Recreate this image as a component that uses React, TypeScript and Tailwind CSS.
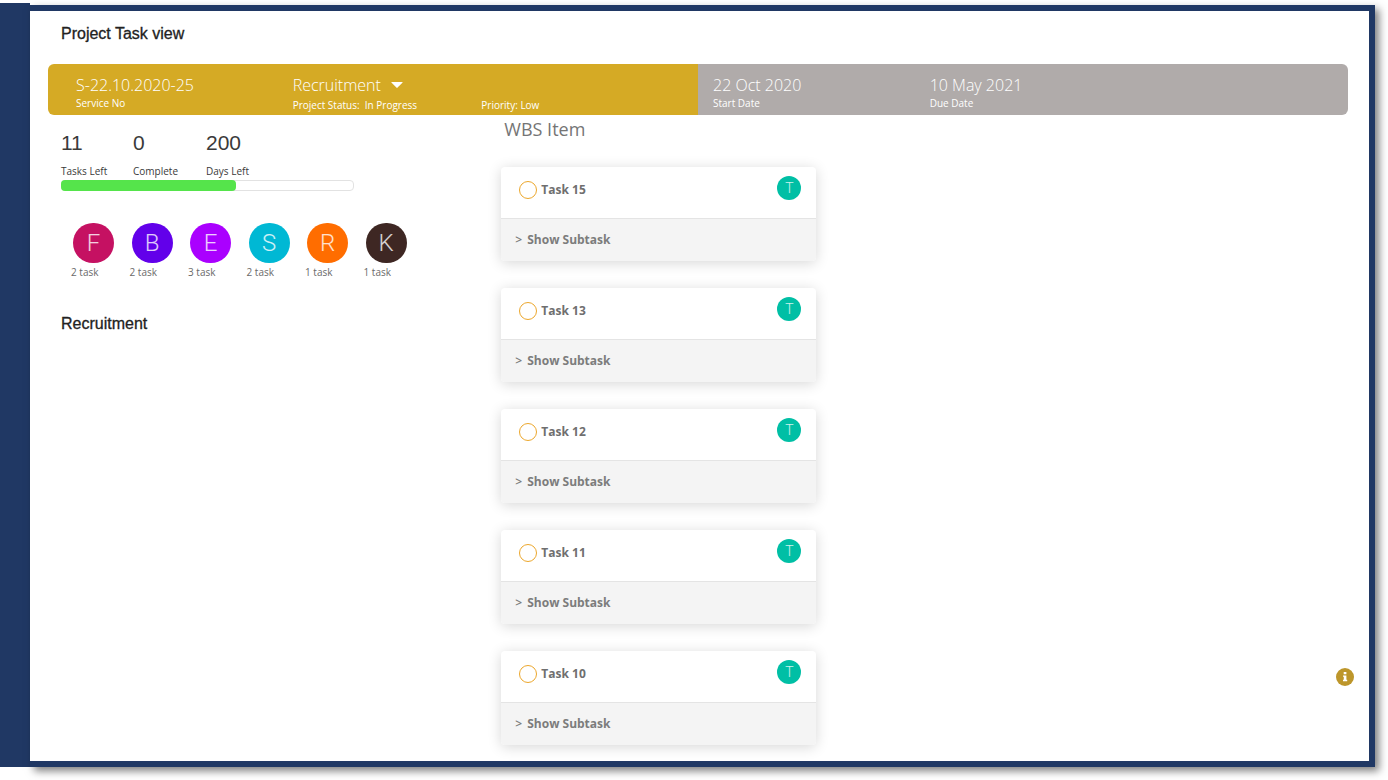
import { useState } from "react";

const stats = [
  { value: "11", label: "Tasks Left" },
  { value: "0", label: "Complete" },
  { value: "200", label: "Days Left" },
];

const members = [
  { initial: "F", count: 2, color: "bg-[#c51162]" },
  { initial: "B", count: 2, color: "bg-[#6200ea]" },
  { initial: "E", count: 3, color: "bg-[#aa00ff]" },
  { initial: "S", count: 2, color: "bg-[#00b8d4]" },
  { initial: "R", count: 1, color: "bg-[#ff6d00]" },
  { initial: "K", count: 1, color: "bg-[#3e2723]" },
];

const tasks = ["Task 15", "Task 13", "Task 12", "Task 11", "Task 10"];

function Field({ value, label }: { value: string; label: string }) {
  return (
    <div>
      <div className="text-base leading-5 font-light">{value}</div>
      <div className="text-[10px] leading-4">{label}</div>
    </div>
  );
}

function SummaryBar() {
  return (
    <section className="mt-[19px] mr-[21px] ml-[18px] grid h-[51px] grid-cols-2 overflow-hidden rounded-md text-white">
      <div className="grid grid-cols-3 bg-[#d5aa25] pt-[11px]">
        <div className="pl-7">
          <Field value="S-22.10.2020-25" label="Service No" />
        </div>
        <div className="pl-7">
          <button type="button" className="flex items-center gap-[10px] text-base leading-5 font-light">
            Recruitment
            <svg className="h-[6px] w-3" viewBox="0 0 12 6" fill="currentColor" aria-hidden="true">
              <path d="M0.8 0H11.2Q12 0 11.4 0.7L6.6 5.6Q6 6.2 5.4 5.6L0.6 0.7Q0 0 0.8 0Z" />
            </svg>
          </button>
          <div className="text-[10px] leading-5 whitespace-pre">Project Status:  In Progress</div>
        </div>
        <div className="pt-5 text-[10px] leading-5">Priority: Low</div>
      </div>
      <div className="grid grid-cols-3 bg-[#b0abaa] pt-[11px]">
        <div className="pl-[15px]">
          <Field value="22 Oct 2020" label="Start Date" />
        </div>
        <div className="pl-[15px]">
          <Field value="10 May 2021" label="Due Date" />
        </div>
      </div>
    </section>
  );
}

function TaskCard({ name }: { name: string }) {
  const [done, setDone] = useState(false);
  return (
    <li className="overflow-hidden rounded-sm bg-white shadow-[0_2px_14px_rgba(0,0,0,0.16)]">
      <div className="flex h-[51px] items-start justify-between pt-[9px] pr-[15px] pl-[18px]">
        <label className="flex items-center gap-1 pt-1 text-xs leading-5 font-bold text-[#6f6f6f]">
          <input
            type="checkbox"
            checked={done}
            onChange={() => setDone(!done)}
            className="size-[18px] appearance-none rounded-full border border-[#eca72c] checked:bg-[#eca72c]"
          />
          {name}
        </label>
        <span className="flex size-6 items-center justify-center rounded-full bg-[#00bfa5] font-[Roboto,sans-serif] text-sm font-light text-white/80">
          T
        </span>
      </div>
      <div className="flex h-[43px] items-center border-t border-[#e4e4e4] bg-[#f4f4f4] pl-[14px]">
        <button type="button" className="flex items-center gap-[5px] text-xs font-bold text-[#7c7c7c]">
          <span className="font-semibold">&gt;</span>
          Show Subtask
        </button>
      </div>
    </li>
  );
}

export default function App() {
  return (
    <div className="flex min-h-screen bg-white pb-[13px] font-['Open_Sans',sans-serif] text-[#3a3a3a]">
      <aside className="mt-[3px] w-[30px] shrink-0 bg-[#203864]" />
      <main className="relative mt-[5px] mr-[13px] min-w-0 flex-1 border-y-[6px] border-r-[6px] border-[#203864] bg-white pb-4 shadow-[4px_4px_8px_rgba(0,0,0,0.5)]">
        <h1 className="pt-3 pl-[31px] font-['Liberation_Sans',sans-serif] text-base leading-[22px] text-[#222222] [-webkit-text-stroke:0.3px_#222222]">
          Project Task view
        </h1>
        <SummaryBar />
        <div className="mr-[21px] ml-[18px] grid grid-cols-3">
          <section className="pl-[13px]">
            <dl className="grid grid-cols-[72px_73px_auto] pt-4">
              {stats.map((s) => (
                <div key={s.label} className="flex flex-col-reverse">
                  <dt className="mt-2 text-[10px] leading-4">{s.label}</dt>
                  <dd className="font-['Liberation_Sans',sans-serif] text-[21px] leading-6">{s.value}</dd>
                </div>
              ))}
            </dl>
            <div className="mt-px h-[11px] w-[293px] rounded-sm border border-[#e2e2e2]">
              <div className="-m-px h-[11px] w-3/5 rounded-sm bg-[#55e44b]" />
            </div>
            <ul className="mt-8 ml-[10px] grid w-[351px] grid-cols-6">
              {members.map((m) => (
                <li key={m.initial}>
                  <span
                    className={`ml-[2px] flex h-10 w-[41px] items-center justify-center rounded-full font-[Roboto,sans-serif] text-2xl font-light text-white/80 ${m.color}`}
                  >
                    {m.initial}
                  </span>
                  <span className="block text-[10px] leading-[18px] text-[#6a6a6a]">{m.count} task</span>
                </li>
              ))}
            </ul>
            <h2 className="mt-8 font-['Liberation_Sans',sans-serif] text-base leading-[22px] text-[#222222] [-webkit-text-stroke:0.3px_#222222]">
              Recruitment
            </h2>
          </section>
          <section className="w-[335px] pl-5">
            <h2 className="pt-[2px] pl-[3px] text-lg leading-6 text-[#757575]">WBS Item</h2>
            <ul className="mt-[26px] flex flex-col gap-[27px]">
              {tasks.map((name) => (
                <TaskCard key={name} name={name} />
              ))}
            </ul>
          </section>
        </div>
        <button type="button" aria-label="Information" className="absolute right-[15px] bottom-[75px] size-[18px]">
          <svg viewBox="0 0 18 18" aria-hidden="true">
            <circle cx="9" cy="9" r="9" fill="#bd962b" />
            <path d="M7.7 4H10.4V6.2H7.7ZM7 7.4H10.4V11.8H11.2V13.2H7V11.8H7.8V8.8H7Z" fill="#fff" />
          </svg>
        </button>
      </main>
    </div>
  );
}
